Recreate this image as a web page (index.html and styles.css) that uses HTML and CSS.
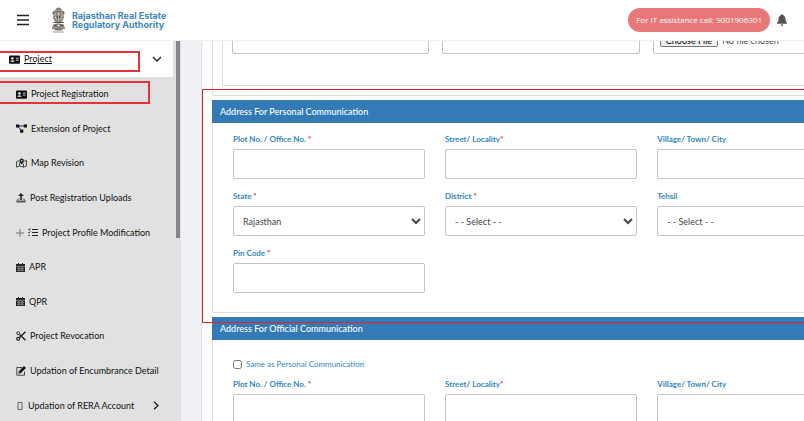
FILE: index.html
```html
<!DOCTYPE html>
<html lang="en">
  <head>
    <meta charset="UTF-8" />
    <meta name="viewport" content="width=device-width, initial-scale=1.0" />
    <title>Rajasthan Real Estate Regulatory Authority</title>
    <link rel="stylesheet" href="styles.css">
  </head>
  <body>
    <header class="topbar">
      <button class="menu-btn" type="button" aria-label="Menu">
        <svg width="12" height="12" viewBox="0 0 12 12"><path d="M0 1.5h12M0 6h12M0 10.5h12" stroke="#222" stroke-width="1.3" /></svg>
      </button>
      <a class="brand" href="#">
        <svg width="15" height="26" viewBox="0 0 15 26">
          <path d="M5 1.500q2.500-2 5 0l1 2 2 1 1 2-1.500 1 .5 3-1.500 3.500-1 1h-6l-1-1L2 10.500l.5-3L1 6.500l1-2 2-1z" fill="#8b847d" />
          <path d="M5.500 3.500h1M8.500 3.500h1M6 6.500q1.500 1 3 0M4 5v4l1.500 4M11 5v4l-1.500 4M7.500 5v9" fill="none" stroke="#d8d3cd" stroke-width=".7" />
          <path d="M5.800 4.500h.8M8.400 4.500h.8M2 6h1.500M11.500 6H13M6 9l1 2M9 9l-1 2" stroke="#302b28" stroke-width=".8" />
          <path d="M2 15h11v1H2zM1 20.500h13v1.200H1z" fill="#5d5752" />
          <path d="M2 17.500q5.500-2 11 0l.5 3h-12z" fill="#8c857f" />
          <circle cx="7.500" cy="18.500" r="1.600" fill="#eee" stroke="#443e3a" stroke-width=".7" />
          <path d="M3 18.500h2M10 18.500h2" stroke="#443e3a" stroke-width=".8" />
          <path d="M3 22h9l-1.500 1.500h-6z" fill="#77706a" />
          <path d="M2 25h11" stroke="#77706a" stroke-width="1" stroke-dasharray="1.500 .6" />
        </svg>
        <span>Rajasthan Real Estate<br />Regulatory Authority</span>
      </a>
      <span class="assist">For IT assistance call: 9001906301</span>
      <button class="bell-btn" type="button" aria-label="Notifications">
        <svg width="10" height="12" viewBox="0 0 10 12"><path d="M5 0q.7 0 .7 1Q8.300 1.600 8.300 4.500q0 3 1.700 4.500v.8H0V9q1.700-1.500 1.700-4.500Q1.700 1.600 4.300 1 4.300 0 5 0zM3.700 10.500h2.600Q6 12 5 12t-1.300-1.500z" fill="#555" /></svg>
      </button>
    </header>

    <div class="layout">
      <nav class="sidebar">
        <a class="menu-head" href="#">
          <svg width="11" height="9" viewBox="0 0 12 9"><rect width="12" height="9" rx="1" fill="#111" /><circle cx="3.700" cy="3.300" r="1.300" fill="#fff" /><path d="M1.500 7q0-1.800 2.200-1.800T6 7zM7.500 2.500h3v1h-3zM7.500 4.700h3v1h-3z" fill="#fff" /></svg>
          <span>Project</span>
          <svg class="chevron" width="10" height="6" viewBox="0 0 10 6"><path d="M1 1l4 4 4-4" fill="none" stroke="#222" stroke-width="1.400" /></svg>
        </a>
        <ul class="menu">
          <li><a href="#">
            <svg width="11" height="9" viewBox="0 0 12 9"><rect width="12" height="9" rx="1" fill="#111" /><circle cx="3.700" cy="3.300" r="1.300" fill="#fff" /><path d="M1.500 7q0-1.800 2.200-1.800T6 7zM7.500 2.500h3v1h-3zM7.500 4.700h3v1h-3z" fill="#fff" /></svg>
            Project Registration</a></li>
          <li><a href="#">
            <svg width="11" height="9" viewBox="0 0 12 9"><path d="M0 0h3.500v3.500H0zM8.500 0H12v3.500H8.500zM4.500 5.500H8V9H4.500z" fill="#111" /><path d="M3 1.700h6M2.500 2.500l3 4" stroke="#111" stroke-width=".9" /></svg>
            Extension of Project</a></li>
          <li><a href="#">
            <svg width="11" height="10" viewBox="0 0 12 10"><path d="M3.500 2.500L.6 3.500v6l3.200-1.300 4.400 1.300 3.200-1.300v-6L9 3M3.800 4.500v3.700M8.200 6v3.500" fill="none" stroke="#222" stroke-width=".9" /><path d="M6.200 7Q3.800 4.500 3.800 2.500a2.400 2.400 0 0 1 4.800 0Q8.600 4.500 6.200 7z" fill="#222" /><circle cx="6.200" cy="2.500" r=".8" fill="#e1e1e1" /></svg>
            Map Revision</a></li>
          <li><a href="#">
            <svg width="10" height="10" viewBox="0 0 10 10"><path d="M5 0l3 3H5.800v4H4.200V3H2z" fill="#222" /><path d="M3.500 6H2L.8 8h8.400L8 6H6.500" fill="none" stroke="#444" stroke-width=".8" /><path d="M.5 8h9v1.500h-9z" fill="#555" /></svg>
            Post Registration Uploads</a></li>
          <li><a href="#">
            <svg width="8" height="8" viewBox="0 0 8 8"><path d="M4 0v8M0 4h8" stroke="#777" /></svg>
            <svg width="10" height="9" viewBox="0 0 10 9"><path d="M4 1.500h6M4 4.500h6M4 7.500h6" stroke="#222" stroke-width="1.200" /><path d="M0 1.300l.9.900L2.500.3M0 4.300l.9.900 1.600-1.900M.3 7.500h1.500" fill="none" stroke="#222" stroke-width=".9" /></svg>
            Project Profile Modification</a></li>
          <li><a href="#">
            <svg width="9" height="9" viewBox="0 0 9 9"><path d="M0 1h9v8H0zM2 0h1v1H2zM6 0h1v1H6z" fill="#222" /><path d="M0 3.400h9M1 5.200h7M1 7.200h7M3 4v4.500M6 4v4.500" stroke="#bbb" stroke-width=".6" /></svg>
            APR</a></li>
          <li><a href="#">
            <svg width="9" height="9" viewBox="0 0 9 9"><path d="M0 1h9v8H0zM2 0h1v1H2zM6 0h1v1H6z" fill="#222" /><path d="M0 3.400h9M1 5.200h7M1 7.200h7M3 4v4.500M6 4v4.500" stroke="#bbb" stroke-width=".6" /></svg>
            QPR</a></li>
          <li><a href="#">
            <svg width="10" height="10" viewBox="0 0 10 10"><path d="M9.500.8L3.500 6.500M3.500 3.500l6 5.700" stroke="#222" stroke-width="1.500" /><circle cx="2.200" cy="2.200" r="1.500" fill="none" stroke="#333" /><circle cx="2.200" cy="7.800" r="1.500" fill="none" stroke="#222" stroke-width="1.200" /></svg>
            Project Revocation</a></li>
          <li><a href="#">
            <svg width="10" height="10" viewBox="0 0 10 10"><path d="M6 1.500H.8v7.700h7.700V5.500" fill="none" stroke="#444" /><path d="M8 0l2 2-5 5-2.700.7L3 5z" fill="#111" /></svg>
            Updation of Encumbrance Detail</a></li>
          <li><a href="#">
            <svg width="8" height="8" viewBox="0 0 8 8"><path d="M2 .5h4v7H2z" fill="none" stroke="#444" stroke-width=".8" /></svg>
            Updation of RERA Account
            <svg class="chevron" width="6" height="9" viewBox="0 0 6 9"><path d="M1 .7l4 3.800-4 3.800" fill="none" stroke="#222" stroke-width="1.400" /></svg></a></li>
        </ul>
        <span class="scroll-thumb"></span>
        <span class="mark mark-project"></span>
        <span class="mark mark-registration"></span>
      </nav>

      <main class="content">
        <form class="sheet">
          <section class="panel panel-upload">
            <div class="subpanel">
              <input type="text" aria-label="Document name" />
              <input type="text" aria-label="Document number" />
              <input type="file" aria-label="Document file" />
            </div>
          </section>

          <section class="panel">
            <h2>Address For Personal Communication</h2>
            <div class="panel-body">
              <div class="fields">
                <div class="field">
                  <label for="plot">Plot No. / Office No. <b>*</b></label>
                  <input type="text" id="plot" />
                </div>
                <div class="field">
                  <label for="street">Street/ Locality<b>*</b></label>
                  <input type="text" id="street" />
                </div>
                <div class="field">
                  <label for="village">Village/ Town/ City</label>
                  <input type="text" id="village" />
                </div>
                <div class="field">
                  <label for="state">State <b>*</b></label>
                  <select id="state"><option>Rajasthan</option></select>
                </div>
                <div class="field">
                  <label for="district">District <b>*</b></label>
                  <select id="district"><option>- - Select - -</option></select>
                </div>
                <div class="field">
                  <label for="tehsil">Tehsil</label>
                  <select id="tehsil"><option>- - Select - -</option></select>
                </div>
                <div class="field">
                  <label for="pin">Pin Code <b>*</b></label>
                  <input type="text" id="pin" />
                </div>
              </div>
            </div>
          </section>

          <section class="panel">
            <h2>Address For Official Communication</h2>
            <div class="panel-body panel-body-official">
              <div class="same">
                <input type="checkbox" id="same" />
                <label for="same">Same as Personal Communication</label>
              </div>
              <div class="fields">
                <div class="field">
                  <label for="oplot">Plot No. / Office No. <b>*</b></label>
                  <input type="text" id="oplot" />
                </div>
                <div class="field">
                  <label for="ostreet">Street/ Locality<b>*</b></label>
                  <input type="text" id="ostreet" />
                </div>
                <div class="field">
                  <label for="ovillage">Village/ Town/ City</label>
                  <input type="text" id="ovillage" />
                </div>
              </div>
            </div>
          </section>
        </form>
        <span class="mark mark-address"></span>
      </main>
    </div>
  </body>
</html>
```

FILE: styles.css
```css
* {
  box-sizing: border-box;
}

body {
  margin: 0;
  font-family: 'Open Sans', Lato, sans-serif;
  font-size: 8px;
  line-height: 14px;
  color: #333;
  background: #eff1f5;
}

button {
  padding: 0;
  border: none;
  background: none;
  cursor: pointer;
}

svg {
  display: block;
  flex: none;
}

a {
  color: inherit;
  text-decoration: none;
}

.topbar {
  position: fixed;
  top: 0;
  left: 0;
  right: 0;
  z-index: 5;
  height: 41px;
  padding: 0 17px;
  display: flex;
  align-items: center;
  background: #fff;
  border-bottom: 1px solid #f0f0f0;
}

.brand {
  display: flex;
  align-items: center;
  gap: 6px;
  margin: 0 auto 0 22px;
  font-family: Inter, sans-serif;
  font-size: 9px;
  font-weight: 700;
  line-height: 9px;
  color: #3c87bd;
}

.assist {
  padding: 5px 8px;
  margin-right: 7px;
  border-radius: 12px;
  background: #e87878;
  color: #fff;
}

.layout {
  display: flex;
  height: 100vh;
  overflow: hidden;
}

.sidebar {
  position: relative;
  flex: none;
  width: 181px;
  padding: 41px 8px 0 0;
  display: flex;
  flex-direction: column;
  background: #e1e1e1;
  font-family: Lato, sans-serif;
  font-size: 9px;
  color: #111;
}

.menu-head {
  display: flex;
  align-items: center;
  gap: 4px;
  height: 36px;
  padding: 0 11px 0 9px;
  background: #fff;
}

.menu-head span {
  text-decoration: underline;
}

.chevron {
  margin-left: auto;
}

.menu {
  flex: 1;
  display: flex;
  flex-direction: column;
  list-style: none;
  margin: 0 0 -2px;
  padding: 0;
}

.menu li {
  flex: 1;
  display: flex;
}

.menu a {
  flex: 1;
  display: flex;
  align-items: center;
  gap: 4px;
  padding: 0 14px 0 16px;
  white-space: nowrap;
}

.scroll-thumb {
  position: absolute;
  top: 41px;
  right: 1px;
  width: 4px;
  height: 197px;
  background: #858585;
}

.content {
  position: relative;
  flex: 1;
  min-width: 0;
  margin-left: 20px;
  overflow: hidden;
  background: #fff;
  border-left: 1px solid #e2e2e6;
  font-family: Lato, sans-serif;
}

.sheet {
  width: 111%;
  padding-left: 10px;
  display: flex;
  flex-direction: column;
  gap: 4px;
}

.panel {
  border: 1px solid #ddd;
  border-radius: 2px;
}

.panel-upload {
  padding: 0 9px 9px;
}

.subpanel {
  display: grid;
  grid-template-columns: repeat(3, 1fr);
  gap: 13px;
  padding: 23px 9px 31px;
  border: 1px solid #ddd;
  border-top: none;
}

.panel h2 {
  margin: -1px -1px 0;
  padding: 5px 8px 4px;
  font-size: 9px;
  font-weight: 500;
  line-height: 14px;
  color: #fff;
  background: #337ab7;
}

.panel-body {
  padding: 9px 20px 19px;
}

.panel-body-official {
  padding-top: 17px;
}

.fields {
  display: grid;
  grid-template-columns: repeat(3, 1fr);
  gap: 10px 20px;
}

.field label {
  display: block;
  margin-bottom: 3px;
  font-weight: 700;
  color: #2f86c2;
}

.field b {
  color: #e04040;
}

input[type='text'],
input[type='file'],
select {
  display: block;
  width: 100%;
  height: 30px;
  border: 1px solid #c4c4c4;
  border-radius: 2px;
  background: #fff;
  font-family: inherit;
  font-size: 9px;
  color: #444;
}

input[type='file'] {
  padding: 1px 6px;
}

input[type='file']::file-selector-button {
  height: 21px;
  padding: 8px 5px 0;
  border: 1px solid #777;
  border-radius: 2px;
  background: #efefef;
  font-family: inherit;
  font-size: 9px;
}

select {
  padding: 0 5px;
}

.same {
  display: flex;
  align-items: center;
  gap: 4px;
  margin-bottom: 6px;
  color: #2f86c2;
}

.same input {
  width: 9px;
  height: 9px;
  margin: 0;
}

/* red callout boxes */
.mark {
  position: absolute;
  border: 1px solid #e0242c;
  pointer-events: none;
}

.mark-project,
.mark-registration {
  left: 0;
  border: 2px solid #e2333a;
  border-left: none;
}

.mark-project {
  top: 51px;
  width: 140px;
  height: 21px;
}

.mark-registration {
  top: 81px;
  width: 150px;
  height: 23px;
}

.mark-address {
  top: 89px;
  left: 0;
  right: 0;
  height: 234px;
  border-right: none;
}
```
